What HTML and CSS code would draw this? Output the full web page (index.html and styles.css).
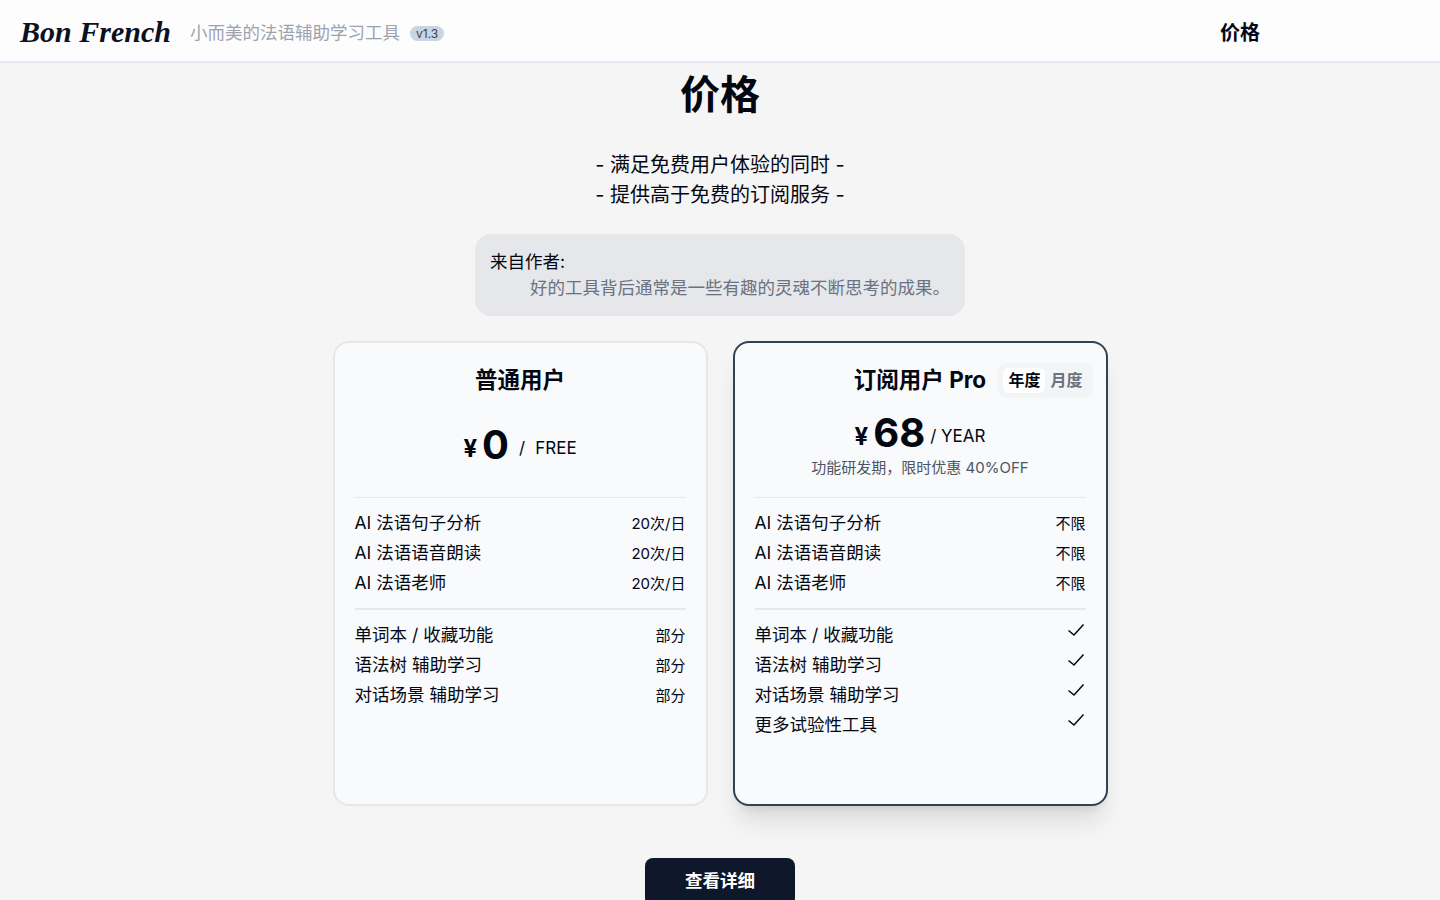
FILE: index.html
```html
<!DOCTYPE html>
<html lang="zh-CN">
<head>
    <meta charset="UTF-8">
    <meta name="viewport" content="width=device-width, initial-scale=1.0">
    <title>Bon French - 价格</title>
    <link rel="stylesheet" href="styles.css">
</head>
<body>
    <nav class="navbar">
        <div class="brand">
            <span class="logo">Bon French</span>
            <span class="tagline">小而美的法语辅助学习工具</span>
            <span class="version">v1.3</span>
        </div>
        <a class="nav-link" href="#">价格</a>
    </nav>

    <main class="page">
        <h1 class="page-title">价格</h1>
        <p class="subtitle">- 满足免费用户体验的同时 -<br>- 提供高于免费的订阅服务 -</p>

        <div class="note">
            <div class="note-from">来自作者:</div>
            <div class="note-text">好的工具背后通常是一些有趣的灵魂不断思考的成果。</div>
        </div>

        <div class="plans">
            <section class="card">
                <div class="card-head">
                    <h2 class="card-title">普通用户</h2>
                </div>
                <div class="price price-free">
                    <div class="price-line">
                        <span class="currency">¥</span>
                        <span class="amount">0</span>
                        <span class="slash">/</span>
                        <span class="period">FREE</span>
                    </div>
                </div>
                <ul class="features">
                    <li><span class="feature-name">AI 法语句子分析</span><span class="limit">20次/日</span></li>
                    <li><span class="feature-name">AI 法语语音朗读</span><span class="limit">20次/日</span></li>
                    <li><span class="feature-name">AI 法语老师</span><span class="limit">20次/日</span></li>
                </ul>
                <ul class="features features-second">
                    <li><span class="feature-name">单词本 / 收藏功能</span><span class="limit">部分</span></li>
                    <li><span class="feature-name">语法树 辅助学习</span><span class="limit">部分</span></li>
                    <li><span class="feature-name">对话场景 辅助学习</span><span class="limit">部分</span></li>
                </ul>
            </section>

            <section class="card card-pro">
                <div class="card-head">
                    <h2 class="card-title">订阅用户 Pro</h2>
                    <div class="toggle">
                        <span class="toggle-item active">年度</span>
                        <span class="toggle-item">月度</span>
                    </div>
                </div>
                <div class="price">
                    <div class="price-line">
                        <span class="currency">¥</span>
                        <span class="amount">68</span>
                        <span class="period period-pro">/ YEAR</span>
                    </div>
                    <div class="price-note">功能研发期&#65292;限时优惠 40%OFF</div>
                </div>
                <ul class="features">
                    <li><span class="feature-name">AI 法语句子分析</span><span class="limit">不限</span></li>
                    <li><span class="feature-name">AI 法语语音朗读</span><span class="limit">不限</span></li>
                    <li><span class="feature-name">AI 法语老师</span><span class="limit">不限</span></li>
                </ul>
                <ul class="features features-second">
                    <li><span class="feature-name">单词本 / 收藏功能</span><svg class="check" viewBox="0 0 20 20"><path d="M2.5 10.5 8 15 17.5 4.5"/></svg></li>
                    <li><span class="feature-name">语法树 辅助学习</span><svg class="check" viewBox="0 0 20 20"><path d="M2.5 10.5 8 15 17.5 4.5"/></svg></li>
                    <li><span class="feature-name">对话场景 辅助学习</span><svg class="check" viewBox="0 0 20 20"><path d="M2.5 10.5 8 15 17.5 4.5"/></svg></li>
                    <li><span class="feature-name">更多试验性工具</span><svg class="check" viewBox="0 0 20 20"><path d="M2.5 10.5 8 15 17.5 4.5"/></svg></li>
                </ul>
            </section>
        </div>

        <button class="detail-button">查看详细</button>
    </main>
</body>
</html>
```

FILE: styles.css
```css
* {
    box-sizing: border-box;
}
html, body {
    height: 100vh;
    overflow: hidden;
}
body {
    margin: 0;
    font-family: Inter, "Noto Sans CJK SC", sans-serif;
    background-color: #f5f5f5;
    color: #030712;
}
.navbar {
    display: flex;
    justify-content: space-between;
    align-items: center;
    height: 63px;
    padding: 2px 180px 0 20px;
    background: #fdfdfe;
    border-bottom: 2px solid #e5e9f5;
}
.brand {
    display: flex;
    align-items: center;
}
.logo {
    width: 170px;
    font-family: "Liberation Serif", serif;
    font-size: 30px;
    font-weight: 700;
    font-style: italic;
    white-space: nowrap;
    color: #0b1120;
}
.tagline {
    font-size: 17.5px;
    color: #9ca3af;
}
.version {
    margin-left: 10px;
    margin-top: 3px;
    padding: 0 6px;
    height: 15px;
    line-height: 15px;
    font-size: 12px;
    color: #374151;
    background: #cbd5e1;
    border-radius: 8px;
}
.nav-link {
    font-size: 20px;
    font-weight: 700;
    color: #030712;
    text-decoration: none;
}
.page {
    display: flex;
    flex-direction: column;
    align-items: center;
}
.page-title {
    margin: 2px 0 0;
    font-size: 40px;
    line-height: 60px;
    font-weight: 700;
}
.subtitle {
    margin: 25px 0 0;
    font-size: 20px;
    line-height: 30px;
    text-align: center;
}
.note {
    width: 490px;
    height: 82px;
    margin-top: 24px;
    padding: 15px;
    background: #e5e7eb;
    border-radius: 16px;
    font-size: 17.5px;
    line-height: 26px;
}
.note-text {
    padding-left: 40px;
    color: #6b7280;
    white-space: nowrap;
}
.plans {
    display: flex;
    gap: 25px;
    margin-top: 25px;
}
.card {
    width: 375px;
    height: 465px;
    padding: 20px;
    background: #f8fafc;
    border: 2px solid #e5e7eb;
    border-radius: 16px;
}
.card-pro {
    border-color: #334155;
    box-shadow: 0 20px 25px -5px rgba(0, 0, 0, 0.1), 0 8px 10px -6px rgba(0, 0, 0, 0.1);
}
.card-head {
    position: relative;
    display: flex;
    justify-content: center;
    align-items: center;
    height: 35px;
}
.card-title {
    margin: 0 0 2px;
    font-size: 22.5px;
    line-height: 30px;
    font-weight: 700;
}
.toggle {
    position: absolute;
    right: -7px;
    top: 0;
    display: flex;
    align-items: center;
    height: 35px;
    padding: 0 5px;
    background: #f3f4f6;
    border-radius: 8px;
}
.toggle-item {
    padding: 0 5px;
    height: 25px;
    line-height: 25px;
    font-size: 16px;
    font-weight: 700;
    color: #6b7280;
    border-radius: 6px;
}
.toggle-item.active {
    color: #030712;
    background: #fff;
}
.price {
    height: 100px;
    padding-top: 10px;
    border-bottom: 1px solid #e5e7eb;
    text-align: center;
}
.price-line {
    display: flex;
    justify-content: center;
    align-items: center;
    height: 50px;
}
.price-free .price-line {
    padding-top: 12px;
    height: 62px;
}
.currency {
    font-size: 24px;
    font-weight: 700;
    margin-right: 5px;
    padding-top: 6px;
}
.amount {
    font-size: 40px;
    line-height: 50px;
    font-weight: 700;
}
.slash {
    margin-left: 10px;
    padding-top: 6px;
    font-size: 17px;
}
.period {
    margin-left: 10px;
    padding-top: 6px;
    font-size: 17px;
}
.period-pro {
    margin-left: 5px;
}
.price-note {
    font-size: 15px;
    line-height: 20px;
    color: #4b5563;
}
.features {
    list-style: none;
    margin: 0;
    padding: 9px 0 11px;
}
.features-second {
    border-top: 2px solid #e5e7eb;
}
.features li {
    display: flex;
    justify-content: space-between;
    align-items: center;
    height: 30px;
    font-size: 17.5px;
}
.feature-name {
    margin-bottom: 2px;
}
.limit {
    font-size: 15px;
}
.check {
    align-self: flex-start;
    width: 20px;
    height: 20px;
    margin-top: 1px;
    fill: none;
    stroke: #030712;
    stroke-width: 1.5;
}
.detail-button {
    flex-shrink: 0;
    width: 150px;
    height: 48px;
    margin-top: 52px;
    padding: 0 0 6px;
    background: #0f172a;
    color: #fff;
    border: none;
    border-radius: 8px;
    font-family: inherit;
    font-size: 17.5px;
    font-weight: 700;
    cursor: pointer;
}
```
